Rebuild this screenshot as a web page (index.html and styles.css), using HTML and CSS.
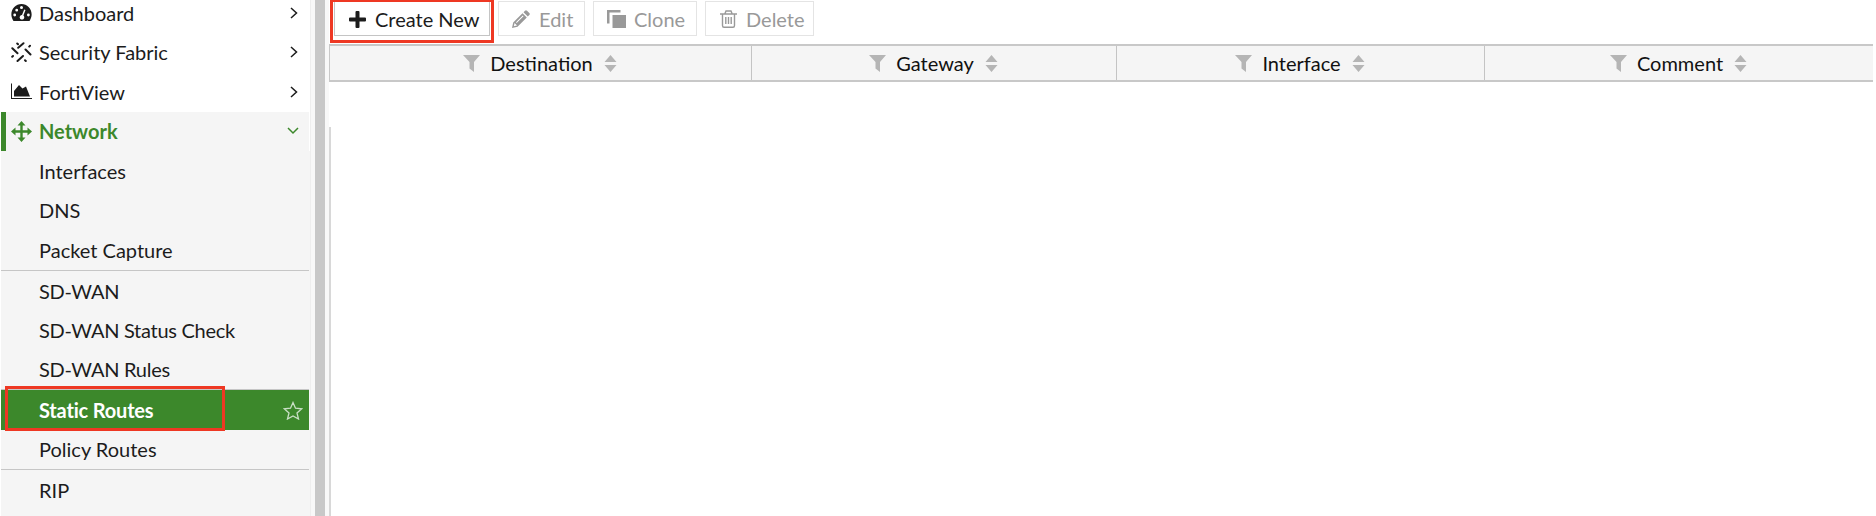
FILE: index.html
```html
<!DOCTYPE html>
<html lang="en">
<head>
<meta charset="utf-8">
<title>Static Routes</title>
<link rel="stylesheet" href="styles.css">
</head>
<body>
<svg class="defs" aria-hidden="true">
  <symbol id="funnel" viewBox="0 0 17 17"><path d="M0 0H17L11 7V17L6.500 13.500V7Z"/></symbol>
  <symbol id="sort" viewBox="0 0 13 17"><path d="M6.500 0L12.500 7H.5ZM.5 10H12.500L6.500 17Z"/></symbol>
  <symbol id="right" viewBox="0 0 8 12"><path d="M1 1L6.500 6L1 11" fill="none" stroke="currentColor" stroke-width="1.500"/></symbol>
</svg>
<div class="app">
  <nav class="sidebar">
    <a class="item"><svg class="icon" viewBox="0 0 21 18"><path fill-rule="evenodd" d="M2.500 17.500C-3 9 3 .5 10.500 .5S24 9 18.500 17.500ZM9 4a1.500 1.500 0 1 0 3 0a1.500 1.500 0 1 0-3 0ZM4.300 6.700a1.400 1.400 0 1 0 2.800 0a1.400 1.400 0 1 0-2.800 0ZM2.300 11.500a1.400 1.400 0 1 0 2.800 0a1.400 1.400 0 1 0-2.800 0ZM16 11.500a1.400 1.400 0 1 0 2.800 0a1.400 1.400 0 1 0-2.800 0ZM13.200 6L11 11.500A2.300 2.300 0 1 0 12.400 12L14.500 6.500Z"/></svg><span class="label">Dashboard</span><svg class="chev"><use href="#right"/></svg></a>
    <a class="item"><svg class="icon" viewBox="0 0 21 21"><path fill="none" stroke="currentColor" stroke-width="2" stroke-linecap="round" d="M7.200 5.800L12.500 1.200M1.300 6.300L6.500 11.300M14.500 7.500L19.500 12.500M6.500 19L12 14M6.200 1.500L7 2.300M18.200 4.600L19 3.800M1.200 14.800L2 14M14 18.200L14.800 19"/></svg><span class="label">Security Fabric</span><svg class="chev"><use href="#right"/></svg></a>
    <a class="item"><svg class="icon" viewBox="0 0 21 16"><path d="M0 0H1V14.500H21V15.500H0ZM3 13V7.500L8 1.500L11.500 5L15 3L19 13Z"/></svg><span class="label">FortiView</span><svg class="chev"><use href="#right"/></svg></a>
    <a class="item open"><svg class="icon" viewBox="0 0 21 21"><path d="M10.500 0L14.500 4.500H11.700V9.300H16.500V6.500L21 10.500L16.500 14.500V11.700H11.700V16.500H14.500L10.500 21L6.500 16.500H9.300V11.700H4.500V14.500L0 10.500L4.500 6.500V9.300H9.300V4.500H6.500Z"/></svg><span class="label">Network</span><svg class="down" viewBox="0 0 12 8"><path d="M1 1L6 6L11 1" fill="none" stroke="currentColor" stroke-width="1.500"/></svg></a>
    <div class="submenu">
      <a class="item">Interfaces</a>
      <a class="item">DNS</a>
      <a class="item">Packet Capture</a>
      <a class="item divided tight">SD-WAN</a>
      <a class="item tight">SD-WAN Status Check</a>
      <a class="item tight">SD-WAN Rules</a>
      <a class="item divided selected"><span class="label">Static Routes</span><svg class="star" viewBox="0 0 20 19"><path d="M10 1.500L12.500 7.200L18.800 7.800L14 12L15.500 18L10 14.900L4.500 18L6 12L1.200 7.800L7.500 7.200Z"/></svg><i class="highlight"></i></a>
      <a class="item">Policy Routes</a>
      <a class="item divided">RIP</a>
    </div>
  </nav>
  <div class="scrollbar"></div>
  <main class="content">
    <div class="toolbar">
      <button class="btn create"><svg width="17" height="17" viewBox="0 0 17 17"><path d="M6.500 1Q6.500 0 7.500 0H9.500Q10.500 0 10.500 1V6.500H16Q17 6.500 17 7.500V9.500Q17 10.500 16 10.500H10.500V16Q10.500 17 9.500 17H7.500Q6.500 17 6.500 16V10.500H1Q0 10.500 0 9.500V7.500Q0 6.500 1 6.500H6.500Z"/></svg>Create New<i class="highlight"></i></button>
      <button class="btn edit" disabled><svg width="18" height="18" viewBox="0 0 18 18"><path fill-rule="evenodd" d="M0 18L1.200 12.500L10.500 3.200L14.800 7.500L5.500 16.800ZM1.800 16.200L5 15.400L2.600 13ZM4 12.300L4.700 13L11.500 6.200L10.800 5.500ZM11.500 2.200L13 .7Q14 -.3 15 .7L17.300 3Q18.300 4 17.300 5L15.800 6.500Z"/></svg>Edit</button>
      <button class="btn clone" disabled><svg width="19" height="18" viewBox="0 0 19 18"><path d="M0 0H13.500V2.500H2.500V13.500H0ZM5.500 5H19V18H5.500Z"/></svg>Clone</button>
      <button class="btn delete" disabled><svg width="17" height="18" viewBox="0 0 17 18"><path fill="none" stroke="currentColor" stroke-width="1.400" d="M0 4H17M5 3.500L6 1H11L12 3.500M2.500 4V15.500Q2.500 17.300 4 17.300H13Q14.500 17.300 14.500 15.500V4M5.800 7V14M8.500 7V14M11.200 7V14"/></svg>Delete</button>
    </div>
    <div class="thead">
      <div class="th"><svg class="filter"><use href="#funnel"/></svg>Destination<svg class="sort"><use href="#sort"/></svg></div>
      <div class="th"><svg class="filter"><use href="#funnel"/></svg>Gateway<svg class="sort"><use href="#sort"/></svg></div>
      <div class="th"><svg class="filter"><use href="#funnel"/></svg>Interface<svg class="sort"><use href="#sort"/></svg></div>
      <div class="th"><svg class="filter"><use href="#funnel"/></svg>Comment<svg class="sort"><use href="#sort"/></svg></div>
    </div>
    <div class="tbody"></div>
  </main>
</div>
</body>
</html>
```
FILE: styles.css
```css
* { box-sizing: border-box; }
body { margin: 0; background: #fff; color: #1c1c1c; font: 20px/24px Lato, sans-serif; overflow: hidden; }
svg { fill: currentColor; flex: none; }
.defs { position: absolute; width: 0; height: 0; }
.app { display: flex; height: 516px; overflow: hidden; }
.sidebar { width: 311px; flex: none; padding-left: 1px; margin-top: -7px; border-right: 1px solid #eee; }
.item { display: flex; align-items: center; height: 39.500px; padding: 0 10px 0 10px; width: 308px; white-space: nowrap; }
.icon { width: 21px; height: 21px; margin-right: 7px; }
.label { flex: 1; }
.chev { width: 8px; height: 12px; margin-right: 1px; }
.down { width: 12px; height: 8px; }
.open { background: #f5f5f5; color: #3c882b; font-weight: bold; border-left: 5px solid #3c882b; padding-left: 5px; }
.submenu { background: #f5f5f5; height: 400px; width: 309px; }
.submenu .item { padding-left: 38px; padding-right: 6px; }
.submenu .tight { letter-spacing: -.28px; }
.submenu .divided { border-top: 1px solid #c6c6c6; height: 40.500px; padding-top: 1px; }
.submenu .selected { position: relative; background: #3c882b; color: #fff; font-weight: bold; letter-spacing: -.18px; }
.star { width: 20px; height: 19px; fill: none; stroke: #c9dfc5; stroke-width: 1.300; }
.highlight { position: absolute; border: 3px solid #ee3823; }
.selected .highlight { left: 4px; top: -4px; width: 220px; height: 45px; }
.scrollbar { width: 18px; flex: none; border: solid #f8f8f8; border-width: 0 4px; background: #c8c8c8; }
.content { flex: 1; display: flex; flex-direction: column; min-width: 0; }
.toolbar { display: flex; height: 44px; padding: 1px 0 8px 5px; }
.btn { display: flex; align-items: center; height: 35px; margin: 0; padding: 1px 0 0 14px; border: 1px solid #ddd; background: #fff; color: #1c1c1c; font: inherit; white-space: nowrap; }
.btn:disabled { color: #999; border-color: #e4e4e4; }
.create { position: relative; width: 156px; margin-right: 8px; border-color: #c4c4c4; }
.create svg { margin-right: 9px; }
.create .highlight { left: -5px; top: -3px; width: 164px; height: 44px; }
.edit { width: 87px; margin-right: 8px; padding-left: 13px; }
.edit svg { margin-right: 9px; }
.clone { width: 104px; margin-right: 8px; padding-left: 13px; }
.clone svg { margin-right: 8px; }
.delete { width: 109px; }
.delete svg { margin-right: 9px; }
.thead { display: grid; grid-template-columns: 422px 365px 368px 1fr; height: 38px; margin-right: 3px; border: solid #c8c8c8; border-width: 2px 0 2px 1px; background: #f5f5f5; }
.th { display: flex; align-items: center; justify-content: center; border-right: 1px solid #c4c4c4; color: #111; padding-right: 1px; }
.th:last-child { border-right: 0; }
.th svg { fill: #b5b5b5; }
.filter { width: 17px; height: 17px; margin-right: 10px; }
.sort { width: 13px; height: 17px; margin-left: 11px; }
.tbody { flex: 1; margin-top: 45px; border-left: 2px solid #d8d8d8; }
```
